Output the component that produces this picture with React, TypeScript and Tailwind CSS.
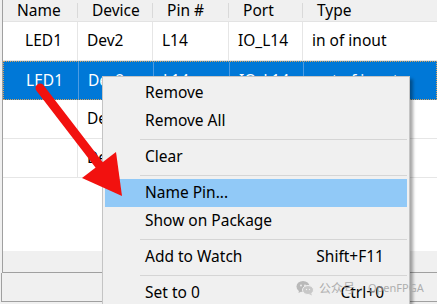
import React from 'react';

const headers = ['Name', 'Device', 'Pin #', 'Port', 'Type'];

// rows 3 and 4 are mostly covered by the context menu, only the Device column shows
const rows = [
  { cells: ['LED1', 'Dev2', 'L14', 'IO_L14', 'in of inout'], selected: false },
  { cells: ['LED1', 'Dev2', 'L14', 'IO_L14', 'out of inout'], selected: true },
  { cells: ['', 'Dev2', '', '', ''], selected: false },
  { cells: ['', 'Dev1', '', '', ''], selected: false },
];

const colW = ['w-[75px]', 'w-[75px]', 'w-[76px]', 'w-[74px]', 'flex-1'];

type MenuEntry = { label: string; shortcut?: string; active?: boolean } | 'sep';

const menu: MenuEntry[] = [
  { label: 'Remove' },
  { label: 'Remove All' },
  'sep',
  { label: 'Clear' },
  'sep',
  { label: 'Name Pin...', active: true },
  { label: 'Show on Package' },
  'sep',
  { label: 'Add to Watch', shortcut: 'Shift+F11' },
  'sep',
  { label: 'Set to 0', shortcut: 'Ctrl+0' },
];

function ContextMenu() {
  return (
    <div className="absolute left-[102px] top-[76px] w-[308px] h-[240px] border border-[#c4c4c4] bg-[#f0f0f0] px-[2px] pt-[2px] shadow-[3px_3px_3px_rgba(0,0,0,0.35)]">
      {menu.map((m, i) =>
        m === 'sep' ? (
          <div key={i} className="h-[8px] flex items-center pl-[35px]">
            <div className="h-px w-full bg-[#d5d5d5]" />
          </div>
        ) : (
          <div
            key={i}
            className={`h-[28px] flex items-center pl-[40px] pr-[23px] ${m.active ? 'bg-[#91c9f7]' : ''}`}
          >
            <span>{m.label}</span>
            {m.shortcut && <span className="ml-auto">{m.shortcut}</span>}
          </div>
        )
      )}
    </div>
  );
}

function Watermark() {
  return (
    <div className="absolute left-[296px] top-[279px] flex items-center gap-[5px] text-[#a8a8a8] opacity-90">
      <svg width="18" height="16" viewBox="0 0 18 16">
        <ellipse cx="7" cy="6.5" rx="6.5" ry="5.5" fill="#b4b4b4" />
        <path d="M3 10.5 L2.5 13 L5.5 11.5 Z" fill="#b4b4b4" />
        <ellipse cx="12" cy="10" rx="5.5" ry="4.5" fill="#c4c4c4" stroke="#f0f0f0" strokeWidth="1" />
        <path d="M15 13 L16 15.5 L13 14 Z" fill="#c4c4c4" />
        <circle cx="5" cy="5.5" r="0.9" fill="#f0f0f0" />
        <circle cx="9" cy="5.5" r="0.9" fill="#f0f0f0" />
        <circle cx="10.5" cy="9.5" r="0.7" fill="#f0f0f0" />
        <circle cx="13.5" cy="9.5" r="0.7" fill="#f0f0f0" />
      </svg>
      <span className="text-[12px] font-['Noto_Sans_CJK_SC',sans-serif]">公众号</span>
      <span className="text-[11px]">·</span>
      <span className="text-[11px]">OpenFPGA</span>
    </div>
  );
}

function Arrow() {
  return (
    <svg className="absolute left-0 top-0" width="437" height="304" viewBox="0 0 437 304">
      <line x1="40" y1="88" x2="100" y2="166" stroke="#f2110f" strokeWidth="9" strokeLinecap="round" />
      <polygon points="82,178 116,152 122,196" fill="#f2110f" />
    </svg>
  );
}

export default function App() {
  return (
    <div className="relative w-[437px] h-[304px] overflow-hidden bg-[#f0f0f0] font-['Noto_Sans',sans-serif] text-[15.5px] text-black">
      <div className="ml-[2px] h-[273px] flex flex-col border-l border-b border-[#a0a0a0] bg-white">
        <div className="flex h-[22px] shrink-0 bg-[#f0f0f0] border-b border-[#e3e3e3]">
          {headers.map((h, i) => (
            <div key={h} className={`${colW[i]} flex items-center pl-[14px]`}>
              <span>{h}</span>
              {i < 4 && <span className="ml-auto h-[15px] w-px bg-[#d9d9d9]" />}
            </div>
          ))}
        </div>
        {rows.map((r, ri) => (
          <div
            key={ri}
            className={`flex h-[39px] shrink-0 ${
              r.selected
                ? 'bg-[#0078d7] text-white border border-dotted border-[#d9a15a]'
                : 'border-b border-[#e6e6e6]'
            }`}
          >
            {r.cells.map((c, ci) => (
              <div
                key={ci}
                className={`${colW[ci]} flex items-center ${
                  ci === 0 ? 'justify-end pr-[15px]' : 'pl-[9px]'
                } ${ci < 4 ? (r.selected ? 'border-r border-[#4d9ce3]' : 'border-r border-[#e6e6e6]') : ''}`}
              >
                {c}
              </div>
            ))}
          </div>
        ))}
        <div className="flex-1" />
        <div className="h-[21px] shrink-0 bg-[#f0f0f0]" />
      </div>
      <div className="ml-[1px] h-[29px] border-l border-b border-[#a0a0a0]" />
      <ContextMenu />
      <Watermark />
      <Arrow />
    </div>
  );
}
